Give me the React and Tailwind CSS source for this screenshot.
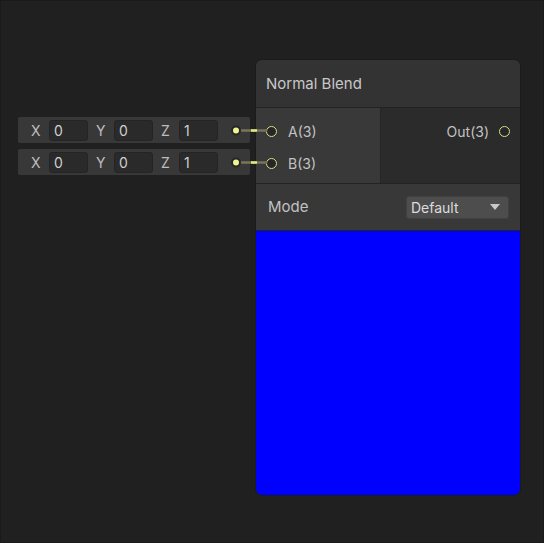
import React from "react";

const font = { fontFamily: "Inter, 'Noto Sans', sans-serif" };

function VecField({ top }) {
  return (
    <div
      className="absolute left-[17px] w-[232px] h-[26px] bg-[#383838] rounded-[2px] flex items-center text-[14px] text-[#bfbfbf]"
      style={{ top }}
    >
      <span className="w-[31px] pl-[13px]">X</span>
      <div className="w-[39px] h-[21px] rounded-[3px] bg-[#2a2a2a] border border-[#242424] flex items-center pl-[4px] text-[#cfcfcf]">0</div>
      <span className="w-[26px] pl-[8px]">Y</span>
      <div className="w-[39px] h-[21px] rounded-[3px] bg-[#2a2a2a] border border-[#242424] flex items-center pl-[4px] text-[#cfcfcf]">0</div>
      <span className="w-[26px] pl-[8px]">Z</span>
      <div className="w-[39px] h-[21px] rounded-[3px] bg-[#2a2a2a] border border-[#242424] flex items-center pl-[4px] text-[#cfcfcf]">1</div>
    </div>
  );
}

function Port() {
  return <div className="w-[11px] h-[11px] rounded-full border-[1.5px] border-[#d8df86] bg-[#262626] shrink-0" />;
}

export default function App() {
  return (
    <div className="relative w-[544px] h-[543px] bg-[#202020] border border-[#1a1a1a] overflow-hidden" style={font}>
      <VecField top={116} />
      <VecField top={148} />

      {/* Node */}
      <div className="absolute left-[254px] top-[58px] w-[266px] h-[437px] border border-[#1b1b1b] rounded-[7px] flex flex-col overflow-hidden bg-[#232323]">
        <div className="h-[47px] bg-[#333333] flex items-center pl-[10px] pt-[1px] text-[15px] text-[#c8c8c8] shrink-0">
          Normal Blend
        </div>
        <div className="h-px bg-[#232323] shrink-0" />
        <div className="h-[75px] flex shrink-0">
          <div className="w-[124px] bg-[#393939] flex flex-col pt-[7px] text-[14px] text-[#c2c2c2]">
            <div className="h-[32px] flex items-center pl-[10px] gap-[11px]">
              <Port />
              <span>A(3)</span>
            </div>
            <div className="h-[32px] flex items-center pl-[10px] gap-[11px]">
              <Port />
              <span>B(3)</span>
            </div>
          </div>
          <div className="w-px bg-[#262626]" />
          <div className="flex-1 bg-[#2b2b2b] pt-[7px] text-[14px] text-[#c2c2c2]">
            <div className="h-[32px] flex items-center justify-end pr-[10px] gap-[10px]">
              <span>Out(3)</span>
              <Port />
            </div>
          </div>
        </div>
        <div className="h-px bg-[#232323] shrink-0" />
        <div className="h-[46px] bg-[#383838] flex items-center justify-between pl-[12px] pr-[11px] text-[15px] text-[#c2c2c2] shrink-0">
          <span>Mode</span>
          <div className="w-[103px] h-[23px] rounded-[3px] bg-[#4d4d4d] border border-[#414141] flex items-center justify-between pl-[4px] pr-[8px] text-[#dcdcdc] text-[14px]">
            <span>Default</span>
            <svg width="10" height="6" viewBox="0 0 10 6">
              <path d="M0 0 L10 0 L5 6 Z" fill="#c8c8c8" />
            </svg>
          </div>
        </div>
        <div className="h-px bg-[#232323] shrink-0" />
        <div className="flex-1 bg-[#0000ff] rounded-b-[6px]" />
      </div>

      {/* Edges */}
      <svg className="absolute left-0 top-0 pointer-events-none" width="544" height="543">
        {[129.5, 161.5].map((y) => (
          <g key={y}>
            <line x1="238" y1={y} x2="266" y2={y} stroke="#75755a" strokeWidth="2.5" />
            <line x1="250" y1={y} x2="256" y2={y} stroke="#e3e87e" strokeWidth="2.5" />
            <circle cx="235" cy={y} r="5" fill="#262626" />
            <circle cx="235" cy={y} r="3" fill="#eef48e" />
          </g>
        ))}
      </svg>
    </div>
  );
}
